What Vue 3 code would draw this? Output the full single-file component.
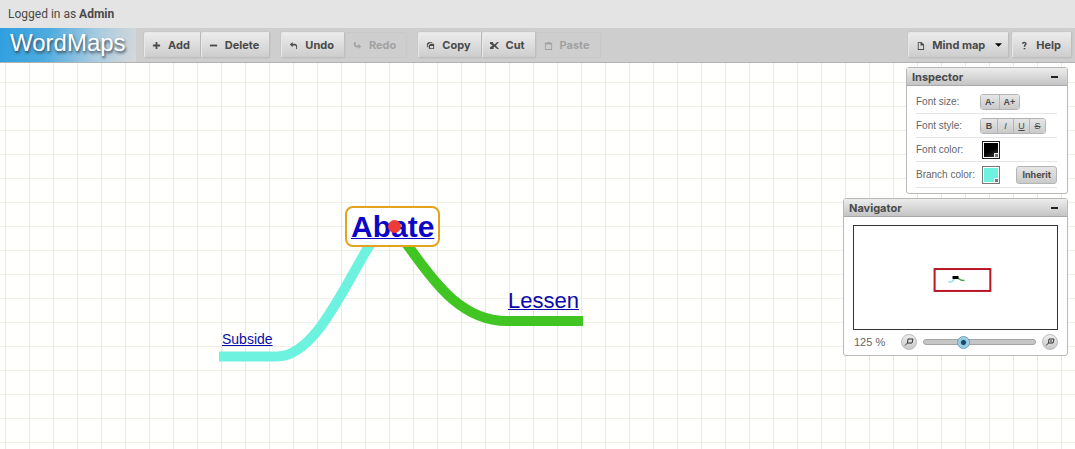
<script setup>
import { ref, computed } from 'vue'

const toolGroups = [
  [
    { label: 'Add', icon: 'plus' },
    { label: 'Delete', icon: 'minus' },
  ],
  [
    { label: 'Undo', icon: 'undo' },
    { label: 'Redo', icon: 'redo', disabled: true },
  ],
  [
    { label: 'Copy', icon: 'copy' },
    { label: 'Cut', icon: 'cut' },
    { label: 'Paste', icon: 'paste', disabled: true },
  ],
]

const icons = {
  plus: 'M4 1h2v3h3v2H6v3H4V6H1V4h3z',
  minus: 'M1 4h8v2H1z',
  undo: 'M1 4l3-3v2h2c2 0 3 1 3 3v3H8V7C8 5.500 7.500 5 6 5H4v2z',
  redo: 'M9 6L6 3v2H3V1H1v3c0 2 1 3 3 3h2v2z',
  copy: 'M1 3l2-2h4v1H4v1H3v1H2v3H1zM3 5l2-2h4v6H4L3 8zM4.500 5.500v2.500H8V5.500z',
  cut: 'M0 1h3l1 2 1 1 3-3h2L6.500 5 10 9H8L5 6.500 4 7v2H0V7l3-2-3-2z',
  paste: 'M3 2V1h4v1h2v8H1V2zM2 4v5h6V4z',
  doc: 'M2 1h4l3 3v6H2zM3 2v7h5V5H5V2z',
}

const zoomLevel = ref(125)
const zoomStep = ref(34)
const zoomText = computed(() => `${zoomLevel.value} %`)
</script>

<template>
  <div class="app">
    <div class="session">Logged in as <strong>Admin</strong></div>

    <header class="toolbar">
      <div class="logo">WordMaps</div>
      <div v-for="(group, i) in toolGroups" :key="i" class="group">
        <button v-for="tool in group" :key="tool.label" class="tool" type="button" :disabled="tool.disabled">
          <svg class="icon" viewBox="0 0 10 10" aria-hidden="true">
            <path :d="icons[tool.icon]" fill-rule="evenodd" />
          </svg>
          {{ tool.label }}
        </button>
      </div>
      <div class="right">
        <button class="tool" type="button">
          <svg class="icon" viewBox="0 0 10 10" aria-hidden="true"><path :d="icons.doc" fill-rule="evenodd" /></svg>
          Mind map
          <svg class="caret" viewBox="0 0 8 4" aria-hidden="true"><path d="M0 0h8L4 4z" /></svg>
        </button>
        <button class="tool" type="button">
          <svg class="icon" viewBox="0 0 10 10" aria-hidden="true">
            <path d="M3 3V2.500C4 1.300 7 1.500 6.500 3.300C6.200 4.300 5 4.500 5 6.300M4 8.500h2" fill="none" stroke="currentColor" stroke-width="1.600" />
          </svg>
          Help
        </button>
      </div>
    </header>

    <main class="canvas">
      <svg class="branches" width="600" height="320" aria-hidden="true">
        <path d="M219 293.500H277C315 293.500 343 225 372 178L384 159" class="branch-left" />
        <path d="M583 258H507C453 258 424 202 402 175L390 160" class="branch-right" />
      </svg>
      <a href="#abate" class="node root">Abate<span class="handle"></span></a>
      <a href="#subside" class="node subside">Subside</a>
      <a href="#lessen" class="node lessen">Lessen</a>

      <aside class="panels">
        <section class="panel inspector">
          <h2 class="title">Inspector <button class="collapse" type="button" aria-label="Collapse inspector"></button></h2>
          <div class="rows">
            <div class="row">
              <span class="name">Font size:</span>
              <div class="set"><button type="button">A-</button><button type="button">A+</button></div>
            </div>
            <div class="row">
              <span class="name">Font style:</span>
              <div class="set">
                <button type="button">B</button><button type="button" class="light"><i>I</i></button><button type="button" class="light"><u>U</u></button><button type="button" class="light"><s>S</s></button>
              </div>
            </div>
            <div class="row">
              <span class="name">Font color:</span>
              <button class="swatch black" type="button" aria-label="Font color"></button>
            </div>
            <div class="row">
              <span class="name">Branch color:</span>
              <button class="swatch aqua" type="button" aria-label="Branch color"></button>
              <button class="inherit" type="button">Inherit</button>
            </div>
          </div>
        </section>

        <section class="panel navigator">
          <h2 class="title">Navigator <button class="collapse" type="button" aria-label="Collapse navigator"></button></h2>
          <div class="overview">
            <svg viewBox="0 0 204 103" aria-hidden="true">
              <path d="M95 56h2C100 56 100 54 102 51" fill="none" stroke="#8fdcf2" stroke-width="1.500" />
              <path d="M103 51C106 53 106 54.500 111 54.500" fill="none" stroke="#3fa03f" stroke-width="1.500" />
              <path d="M99 50h6v3h-6z" />
              <rect x="81" y="43" width="56" height="22" fill="none" stroke="#b81622" stroke-width="2" />
            </svg>
          </div>
          <div class="zoom">
            <output class="percent">{{ zoomText }}</output>
            <button class="round" type="button" aria-label="Zoom out">
              <svg viewBox="0 0 10 10" aria-hidden="true"><path d="M4 2h5l-1 4H3.500zM3.500 6L1 8.500" /></svg>
            </button>
            <input v-model="zoomStep" class="slider" type="range" min="0" max="100" aria-label="Zoom" />
            <button class="round" type="button" aria-label="Zoom in">
              <svg viewBox="0 0 10 10" aria-hidden="true"><path d="M4 2h5l-1 4H3.500zM3.500 6L1 8.500M6 3v2" /></svg>
            </button>
          </div>
        </section>
      </aside>
    </main>
  </div>
</template>

<style>
body {
  margin: 0;
}
</style>

<style scoped>
.app {
  display: flex;
  flex-direction: column;
  min-height: 100vh;
  font-family: "Liberation Sans", Arial, sans-serif;
  color: #4a4a4a;
}
.app *,
.app *::after {
  box-sizing: border-box;
}
button {
  margin: 0;
  padding: 0;
  font-family: inherit;
  color: inherit;
}
.session {
  height: 28px;
  padding-left: 8px;
  background: #e4e4e4;
  font: 12px/28px Roboto, sans-serif;
}
.toolbar {
  display: flex;
  align-items: center;
  height: 35px;
  background: #cecece;
  border-bottom: 1px solid #b2b2b2;
}
.logo {
  width: 136px;
  height: 34px;
  padding-left: 10px;
  margin-right: 8px;
  background: linear-gradient(100deg, #2f9fe0 0%, #4dabdf 35%, #a9cbe0 70%, #d6d8da 100%);
  color: #fff;
  font-size: 24px;
  line-height: 29px;
  text-shadow: 1px 2px 3px #345;
}
.group {
  display: flex;
  margin-right: 11px;
}
.right {
  display: flex;
  gap: 3px;
  margin-left: auto;
  margin-right: 3px;
}
.tool {
  display: flex;
  align-items: center;
  gap: 7px;
  height: 26px;
  padding: 0 10px 0 7px;
  border: 1px solid #bdbdbd;
  border-left-color: #e8e8e8;
  border-top-color: #e8e8e8;
  border-radius: 2px;
  background: linear-gradient(#ececec, #cdcdcd);
  box-shadow: 0 0 1px #999;
  font: bold 11px Inter, sans-serif;
}
.tool:disabled {
  background: none;
  border-color: #c9c9c9;
  box-shadow: none;
  color: #a2a2a2;
}
.icon {
  width: 9px;
  height: 9px;
  fill: currentColor;
}
.caret {
  width: 7px;
  height: 4px;
  margin-left: 3px;
  margin-right: -4px;
}
.canvas {
  position: relative;
  flex: 1;
  min-height: 386px;
  overflow: hidden;
  background-color: #fffffd;
  background-image:
    linear-gradient(90deg, #ebe9df 1px, transparent 1px),
    linear-gradient(#f1f0e5 1px, transparent 1px);
  background-size: 24px 24px;
  background-position: 5px 19px;
}
.branches {
  position: absolute;
  left: 0;
  top: 0;
}
.branches path {
  fill: none;
  stroke-width: 10;
}
.branches .branch-left {
  stroke: #6ef2e0;
}
.branches .branch-right {
  stroke: #40c522;
}
.node {
  position: absolute;
  color: #0a0aa8;
  text-decoration-thickness: 1px;
}
.root {
  left: 345px;
  top: 143px;
  padding: 0 4px;
  border: 2px solid #e3a41c;
  border-radius: 8px;
  background: #fff;
  color: #0b05c8;
  font-size: 30px;
  font-weight: bold;
  line-height: 37px;
}
.handle {
  position: absolute;
  left: 41px;
  top: 12px;
  width: 13px;
  height: 13px;
  border-radius: 50%;
  background: #ef3b35;
}
.subside {
  left: 222px;
  top: 268px;
  font-size: 14px;
  line-height: 16px;
}
.lessen {
  left: 508px;
  top: 225px;
  font-size: 22px;
  line-height: 25px;
}
.panels {
  position: absolute;
  top: 4px;
  right: 7px;
  display: flex;
  flex-direction: column;
  align-items: flex-end;
  gap: 4px;
}
.panel {
  border: 1px solid #b8b8b8;
  border-radius: 3px;
  background: #fff;
}
.inspector {
  width: 162px;
}
.navigator {
  width: 225px;
}
.title {
  display: flex;
  align-items: center;
  justify-content: space-between;
  height: 18px;
  margin: 0;
  padding: 0 9px 0 5px;
  border-bottom: 1px solid #aaa;
  background: linear-gradient(#ededed, #c4c4c4);
  font: bold 11px Inter, sans-serif;
}
.collapse {
  width: 7px;
  height: 2px;
  border: 0;
  background: #222;
}
.rows {
  padding: 4px 10px 5px 9px;
}
.row {
  display: flex;
  align-items: center;
  height: 24px;
  border-bottom: 1px solid #e5e5e5;
  font-size: 10px;
}
.row:nth-child(4) {
  height: 26px;
}
.name {
  width: 64px;
  color: #666;
}
.set {
  display: flex;
  border: 1px solid #b5b5b5;
  border-radius: 3px;
  overflow: hidden;
}
.set button {
  min-width: 16px;
  height: 14px;
  padding: 0 4px;
  border: 0;
  background: linear-gradient(#e6e6e6, #cacaca);
  font-size: 9px;
  font-weight: bold;
}
.set button + button {
  border-left: 1px solid #b5b5b5;
}
.set .light {
  font-weight: normal;
}
.swatch {
  position: relative;
  width: 18px;
  height: 18px;
  margin-left: 2px;
  border: 1px solid #777;
  box-shadow: inset 0 0 0 1px #fff;
}
.swatch::after {
  content: "";
  position: absolute;
  right: 0;
  bottom: 0;
  width: 5px;
  height: 5px;
  border: 1px solid #eee;
  background: #777;
}
.black {
  border-color: #222;
  background: linear-gradient(150deg, #000 50%, #444);
}
.aqua {
  background: #6ef2e0;
}
.inherit {
  height: 18px;
  margin-left: auto;
  padding: 0 5px;
  border: 1px solid #b5b5b5;
  border-radius: 3px;
  background: linear-gradient(#e6e6e6, #cacaca);
  font: bold 9px Inter, sans-serif;
}
.overview {
  height: 105px;
  margin: 8px 9px 0;
  border: 1px solid #333;
}
.overview svg {
  display: block;
  width: 100%;
  height: 100%;
}
.zoom {
  display: flex;
  align-items: center;
  gap: 6px;
  height: 25px;
  padding: 0 9px 1px 10px;
}
.percent {
  width: 41px;
  color: #666;
  font-size: 11px;
}
.round {
  display: flex;
  align-items: center;
  justify-content: center;
  width: 16px;
  height: 16px;
  flex: none;
  border: 1px solid #bbb;
  border-radius: 50%;
  background: linear-gradient(#eee, #c8c8c8);
}
.round svg {
  width: 10px;
  height: 10px;
  flex: none;
  fill: none;
  stroke: #333;
}
.slider {
  flex: 1;
  min-width: 0;
  height: 14px;
  margin: 0;
  appearance: none;
  background: none;
}
.slider::-webkit-slider-runnable-track {
  height: 6px;
  border: 1px solid #a5a5a5;
  border-radius: 3px;
  background: #c6c6c6;
}
.slider::-webkit-slider-thumb {
  width: 13px;
  height: 13px;
  margin-top: -4px;
  appearance: none;
  border: 1px solid #6a9db5;
  border-radius: 50%;
  background: radial-gradient(circle, #174a62 0 2px, #8cc6de 3px, #bfe3f0);
}
</style>
